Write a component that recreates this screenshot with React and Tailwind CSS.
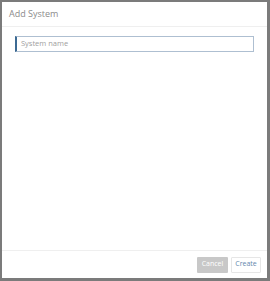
export default function App() {
  return (
    <div className="w-[270px] h-[281px] bg-[#7b7b7b] pt-[2px] pl-[2px] pr-[3px] pb-[3px]" style={{ fontFamily: '"Open Sans", sans-serif' }}>
      <div className="h-full bg-white flex flex-col">
        <div className="h-[25px] flex items-center px-[7px] border-b border-[#efefef]">
          <span className="text-[9px] text-[#8c8c8c]">Add System</span>
        </div>
        <div className="flex-1 pt-[9px] px-[13px]">
          <div className="h-[16px] border border-[#aebfd1] border-l-[2px] border-l-[#3c6a93] flex items-center pl-[4px]">
            <span className="text-[7.5px] text-[#a0a0a0]">System name</span>
          </div>
        </div>
        <div className="h-[28px] border-t border-[#efefef] flex items-center justify-end gap-[3px] pr-[6px]">
          <button className="h-[16px] w-[31px] bg-[#c8c8c8] text-white text-[7px] rounded-[1px]">Cancel</button>
          <button className="h-[16px] w-[30px] bg-white border border-[#e6e6e6] text-[#6587ad] text-[7px] rounded-[1px]">Create</button>
        </div>
      </div>
    </div>
  )
}
